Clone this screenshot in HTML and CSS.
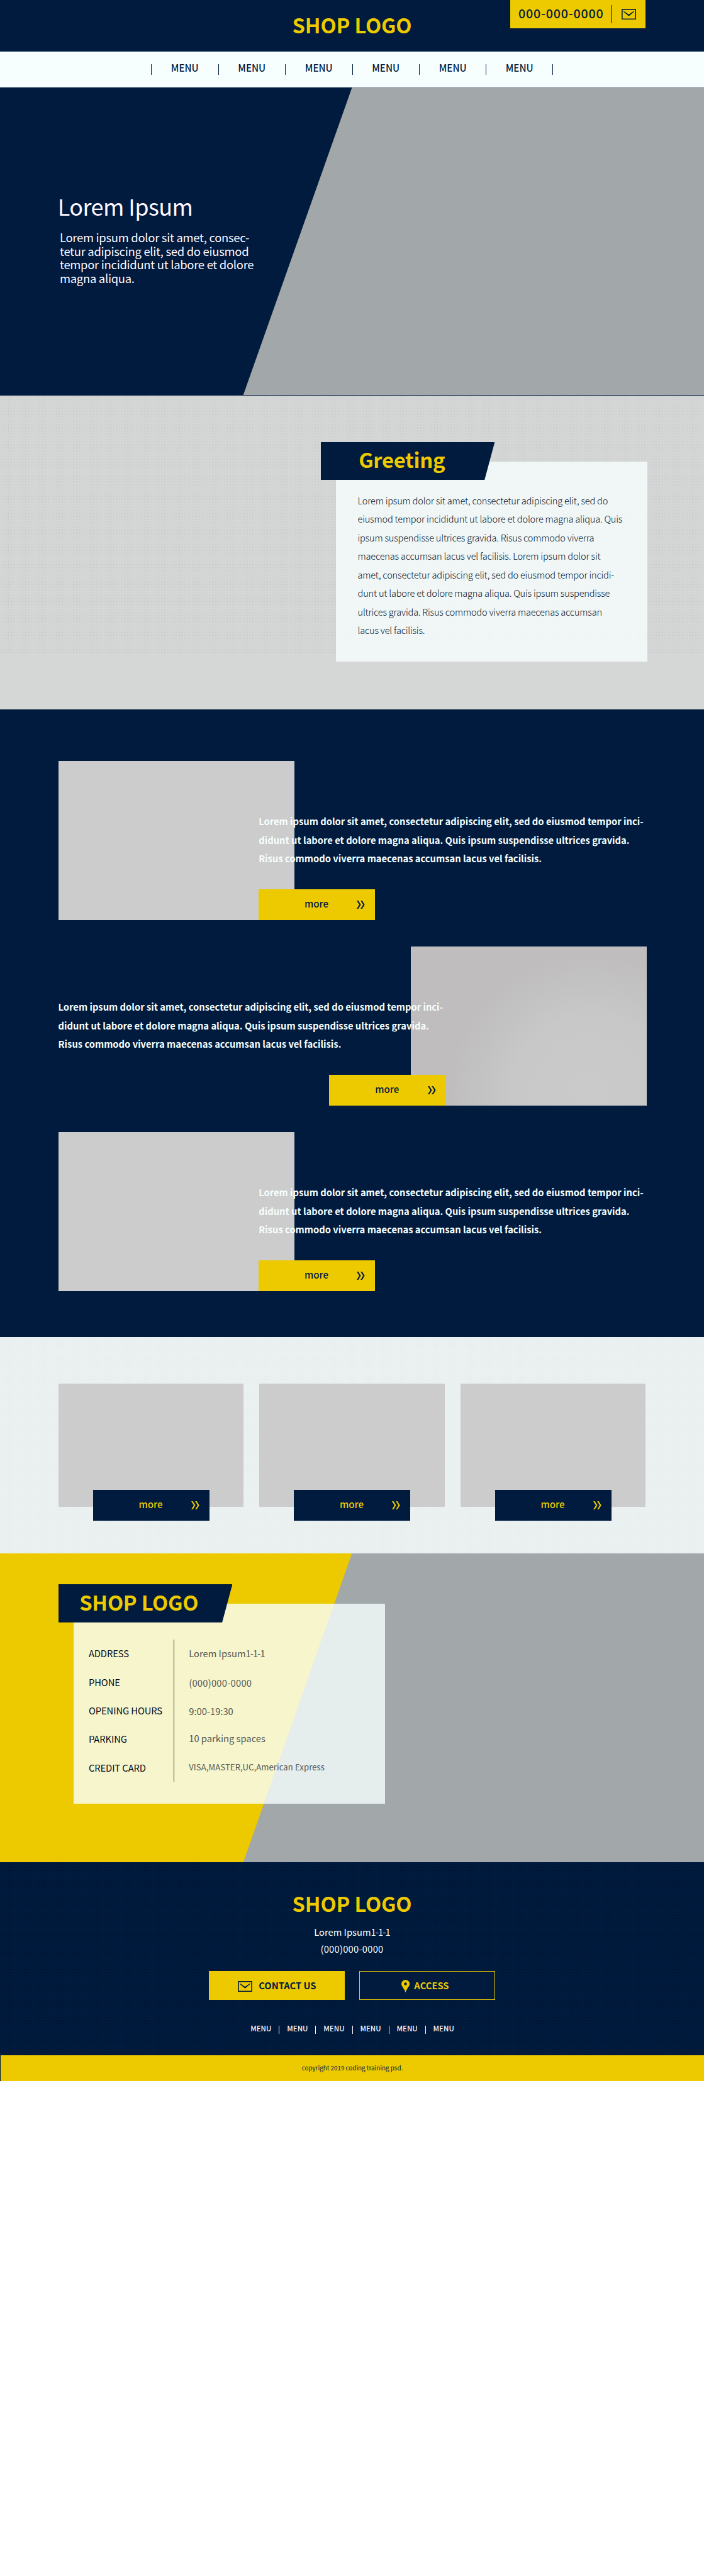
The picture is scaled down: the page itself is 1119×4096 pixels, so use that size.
FILE: index.html
```html
<!DOCTYPE html>
<html lang="en">
<head>
<meta charset="utf-8">
<title>SHOP LOGO</title>
<link rel="stylesheet" href="styles.css">
</head>
<body>
<svg class="defs" width="0" height="0" aria-hidden="true">
  <symbol id="mail" viewBox="0 0 28 21"><rect x="1" y="1" width="26" height="19" fill="none" stroke="currentColor" stroke-width="2"/><path d="M3.5 5.5 4.5 4.7 14 11 23.500 4.700 24.500 5.500 14 14.200z" fill="currentColor"/></symbol>
  <symbol id="chev" viewBox="0 0 16 16"><path d="M0 0h3l5 8-5 8H0l5-8zM7.500 0h3l5 8-5 8h-3l5-8z" fill="currentColor"/></symbol>
  <symbol id="pin" viewBox="0 0 16 25"><path fill="currentColor" fill-rule="evenodd" d="M8 0a8 8 0 0 1 8 8c0 5-6 9-8 17C6 17 0 13 0 8a8 8 0 0 1 8-8zm0 5.200a2.700 2.700 0 1 0 0 5.400 2.700 2.700 0 0 0 0-5.400z"/></symbol>
</svg>

<header class="header">
  <h1 class="logo">SHOP LOGO</h1>
  <div class="contact">
    <span class="contact-tel">000-000-0000</span>
    <span class="contact-mail"><svg class="mail"><use href="#mail"/></svg></span>
  </div>
</header>

<nav class="nav">
  <a>MENU</a><a>MENU</a><a>MENU</a><a>MENU</a><a>MENU</a><a>MENU</a>
</nav>

<section class="hero">
  <h2 class="hero-title">Lorem Ipsum</h2>
  <p class="hero-text">Lorem ipsum dolor sit amet, consec-<br>tetur adipiscing elit, sed do eiusmod<br>tempor incididunt ut labore et dolore<br>magna aliqua.</p>
</section>

<section class="greeting">
  <div class="panel">
    <h2 class="label label-greeting">Greeting</h2>
    <p class="greeting-text">Lorem ipsum dolor sit amet, consectetur adipiscing elit, sed do<br>eiusmod tempor incididunt ut labore et dolore magna aliqua. Quis<br>ipsum suspendisse ultrices gravida. Risus commodo viverra<br>maecenas accumsan lacus vel facilisis. Lorem ipsum dolor sit<br>amet, consectetur adipiscing elit, sed do eiusmod tempor incidi-<br>dunt ut labore et dolore magna aliqua. Quis ipsum suspendisse<br>ultrices gravida. Risus commodo viverra maecenas accumsan<br>lacus vel facilisis.</p>
  </div>
</section>

<section class="features">
  <article class="feature">
    <div class="feature-image"></div>
    <div class="feature-body">
      <p class="feature-text">Lorem ipsum dolor sit amet, consectetur adipiscing elit, sed do eiusmod tempor inci-<br>didunt ut labore et dolore magna aliqua. Quis ipsum suspendisse ultrices gravida.<br>Risus commodo viverra maecenas accumsan lacus vel facilisis.</p>
      <a class="more">more<svg class="chev"><use href="#chev"/></svg></a>
    </div>
  </article>
  <article class="feature feature-reverse">
    <div class="feature-image feature-photo"></div>
    <div class="feature-body">
      <p class="feature-text">Lorem ipsum dolor sit amet, consectetur adipiscing elit, sed do eiusmod tempor inci-<br>didunt ut labore et dolore magna aliqua. Quis ipsum suspendisse ultrices gravida.<br>Risus commodo viverra maecenas accumsan lacus vel facilisis.</p>
      <a class="more">more<svg class="chev"><use href="#chev"/></svg></a>
    </div>
  </article>
  <article class="feature">
    <div class="feature-image"></div>
    <div class="feature-body">
      <p class="feature-text">Lorem ipsum dolor sit amet, consectetur adipiscing elit, sed do eiusmod tempor inci-<br>didunt ut labore et dolore magna aliqua. Quis ipsum suspendisse ultrices gravida.<br>Risus commodo viverra maecenas accumsan lacus vel facilisis.</p>
      <a class="more">more<svg class="chev"><use href="#chev"/></svg></a>
    </div>
  </article>
</section>

<section class="cards">
  <div class="card"><a class="more more-dark">more<svg class="chev"><use href="#chev"/></svg></a></div>
  <div class="card"><a class="more more-dark">more<svg class="chev"><use href="#chev"/></svg></a></div>
  <div class="card"><a class="more more-dark">more<svg class="chev"><use href="#chev"/></svg></a></div>
</section>

<section class="shop">
  <div class="panel">
    <h2 class="label label-shop">SHOP LOGO</h2>
    <div class="info">
      <ul class="info-names"><li>ADDRESS</li><li>PHONE</li><li>OPENING HOURS</li><li>PARKING</li><li>CREDIT CARD</li></ul>
      <ul class="info-values"><li>Lorem Ipsum<span class="tight">1-1-1</span></li><li class="phone">(000)000-0000</li><li>9:00-19:30</li><li>10 parking spaces</li><li class="small">VISA,MASTER,UC,American Express</li></ul>
    </div>
  </div>
</section>

<footer class="footer">
  <div class="footer-logo">SHOP LOGO</div>
  <p class="footer-address">Lorem Ipsum<span class="tight">1-1-1</span><br><span class="phone">(000)000-0000</span></p>
  <div class="footer-buttons">
    <a class="button button-contact"><svg class="mail"><use href="#mail"/></svg>CONTACT US</a>
    <a class="button button-access"><svg class="pin"><use href="#pin"/></svg>ACCESS</a>
  </div>
  <div class="footer-menu"><a>MENU</a><a>MENU</a><a>MENU</a><a>MENU</a><a>MENU</a><a>MENU</a></div>
</footer>
<div class="copyright">copyright 2019 coding training psd.</div>
</body>
</html>
```
FILE: styles.css
```css
/* 1rem is ten design pixels on the 1366px wide layout */
html { font-size: 8.192px; }
* { box-sizing: border-box; margin: 0; padding: 0; }
body {
  font-family: "Noto Sans CJK JP", "Noto Sans", sans-serif;
  background: #fff;
  color: #001b3e;
  white-space: nowrap;
  overflow-x: hidden;
}
ul { list-style: none; }
svg { display: block; }
.defs { position: absolute; }
.tight { letter-spacing: -.11rem; }
.phone { letter-spacing: .03rem; }

.header { position: relative; height: 10rem; background: #001b3e; display: flex; justify-content: center; }
.logo, .footer-logo { font-size: 4rem; line-height: 6rem; font-weight: 700; color: #edca00; letter-spacing: -.02rem; }
.logo { padding-top: 1.750rem; }
.contact {
  position: absolute; top: 0; right: 11.300rem;
  width: 26.300rem; height: 5.500rem;
  background: #edca00;
  display: flex; align-items: center;
  padding-left: 1.600rem;
}
.contact-tel { font-size: 2.400rem; font-weight: 500; line-height: 3.100rem; width: 17.900rem; padding-bottom: .4rem; letter-spacing: .095rem; }
.contact-mail { height: 3.500rem; border-left: 1px solid #001b3e; padding: .7rem 0 0 1.950rem; }
.mail { width: 2.800rem; height: 2.100rem; }

.nav { height: 7rem; background: #f7fffe; display: flex; justify-content: center; align-items: center; }
.nav a { width: 13rem; height: 2rem; line-height: 1.400rem; border-left: 1px solid #001b3e; text-align: center; font-size: 1.850rem; font-weight: 500; }
.nav a:last-child { border-right: 1px solid #001b3e; }

.hero {
  height: 59.800rem;
  background: #001b3e;
  position: relative;
  padding: 20rem 0 0 11.200rem;
  color: #fff7ff;
}
.hero::after {
  content: ""; position: absolute; inset: 0 0 1px 0;
  background: #a2a7aa;
  clip-path: polygon(50% 0, 100% 0, 100% 100%, 34.550% 100%);
}
.hero-title { font-size: 4.400rem; line-height: 6rem; font-weight: 400; letter-spacing: -.07rem; }
.hero-text { font-size: 2.250rem; line-height: 2.630rem; font-weight: 400; letter-spacing: -.035rem; padding: 1.800rem 0 0 .4rem; }

.greeting {
  height: 60.900rem;
  padding: 12.800rem 0 0 65.200rem;
  background:
    linear-gradient(#d5d7d6, #d5d7d6) 0 49.900rem / 100% 12rem no-repeat,
    radial-gradient(circle, #c3c5c4 .08rem, transparent .1rem) 0 0 / .3rem .3rem,
    #d5d7d6;
}
.panel { position: relative; width: 60.400rem; height: 38.800rem; background: rgba(247, 255, 254, .8); }
.label {
  position: absolute; left: -3rem; top: -3.800rem;
  width: 33.800rem; height: 7.400rem;
  background: #001b3e; color: #edca00;
  clip-path: polygon(0 0, 100% 0, 94.100% 100%, 0 100%);
  font-size: 4rem; font-weight: 700;
}
.label-greeting { padding-left: 7.400rem; line-height: 6.600rem; letter-spacing: -.035rem; }
.label-shop { padding-left: 4.100rem; line-height: 6.900rem; letter-spacing: -.03rem; }
.greeting-text { padding: 5.700rem 0 0 4.200rem; font-size: 1.780rem; line-height: 3.600rem; font-weight: 300; letter-spacing: -.025rem; color: #00122c; }

.features { height: 121.800rem; padding: 10rem 11.100rem 0 11.300rem; background: #001b3e; display: flex; flex-direction: column; gap: 5.100rem; }
.feature { height: 30.900rem; display: grid; grid-template-columns: 38.900rem 6.900rem 1fr; }
.feature-image { grid-area: 1 / 1 / 2 / 3; background: #ccc; }
.feature-body { grid-area: 1 / 2 / 2 / 4; z-index: 1; padding-top: 9.950rem; display: flex; flex-direction: column; justify-content: space-between; align-items: flex-start; }
.feature-text { font-size: 1.800rem; line-height: 3.600rem; font-weight: 700; color: #f7fffe; }
.feature-reverse { grid-template-columns: 1fr 6.800rem 39rem; }
.feature-reverse .feature-image { grid-area: 1 / 2 / 2 / 4; }
.feature-reverse .feature-body { grid-area: 1 / 1 / 2 / 3; }
.feature-reverse .more { align-self: flex-end; }
.feature-photo { background: radial-gradient(ellipse 60% 88% at 76% 92%, #cacaca 0, #c8c8c8 55%, #bfbdbd 100%); }
.more {
  position: relative;
  width: 22.600rem; height: 6rem;
  background: #edca00; color: #001b3e;
  font-size: 1.850rem; line-height: 5.400rem; font-weight: 500;
  text-align: center;
  padding-right: .2rem;
}
.chev { position: absolute; right: 1.950rem; top: 2.200rem; width: 1.600rem; height: 1.600rem; }
.more-dark { background: #001b3e; color: #edca00; }

.cards {
  height: 42rem;
  padding: 9rem 11.300rem 0;
  display: grid; grid-template-columns: repeat(3, 36rem); gap: 3rem;
  background: radial-gradient(circle, #e2ebea .06rem, transparent .1rem) 0 0 / .3rem .3rem, #ebf1f1;
}
.card { height: 24rem; background: #ccc; padding: 20.700rem 0 0 6.750rem; }
.card .more { display: block; }

.shop { height: 60rem; padding: 9.800rem 0 0 14.300rem; position: relative; background: #a2a7aa; }
.shop::before {
  content: ""; position: absolute; inset: 0;
  background: #edca00;
  clip-path: polygon(0 0, 50% 0, 34.550% 100%, 0 100%);
}
.info { display: flex; padding: 7rem 0 0 2.900rem; font-size: 1.800rem; }
.info-names { width: 16.650rem; height: 27.500rem; border-right: .2rem solid #33383f; color: #000b1e; letter-spacing: -.01rem; }
.info-values { padding-left: 2.800rem; color: #555; }
.info li { height: 5.530rem; line-height: 5.330rem; }
.info-values li:nth-child(1) { height: 5.700rem; }
.info-values li:nth-child(2) { height: 5.460rem; }
.info-values li:nth-child(3) { height: 5.240rem; }
.info-values li:nth-child(4) { height: 5.600rem; }
.info-values .small { font-size: 1.600rem; letter-spacing: .012rem; }

.footer {
  height: 37.400rem;
  background: radial-gradient(circle, #00112b .08rem, transparent .1rem) 0 0 / .3rem .3rem, #001b3e;
  display: flex; flex-direction: column; align-items: center;
  padding-top: 4.850rem;
}
.footer-address { font-size: 1.800rem; line-height: 3.300rem; text-align: center; color: #f7fffe; padding-top: 1rem; }
.footer-buttons { display: flex; gap: 2.800rem; padding-top: 2.650rem; }
.button { width: 26.400rem; height: 5.600rem; display: flex; align-items: center; font-size: 1.800rem; line-height: 5.200rem; font-weight: 700; }
.button svg { margin-top: .3rem; }
.button-contact { background: #edca00; gap: 1.200rem; padding-left: 5.700rem; }
.button-access { border: 1px solid #edca00; background: #001b3e; color: #edca00; gap: .85rem; padding-left: 8.100rem; }
.pin { width: 1.600rem; height: 2.500rem; }
.footer-menu { display: flex; padding-top: 5rem; }
.footer-menu a { width: 7.090rem; height: 1.600rem; line-height: 1.200rem; text-align: center; font-size: 1.400rem; font-weight: 500; color: #fff7ff; border-left: 1px solid #fff7ff; }
.footer-menu a:first-child { border-left-color: transparent; }
.copyright { height: 5rem; background: #edca00; border-left: 1px solid #001b3e; text-align: center; font-size: 1.200rem; line-height: 5rem; }
```
